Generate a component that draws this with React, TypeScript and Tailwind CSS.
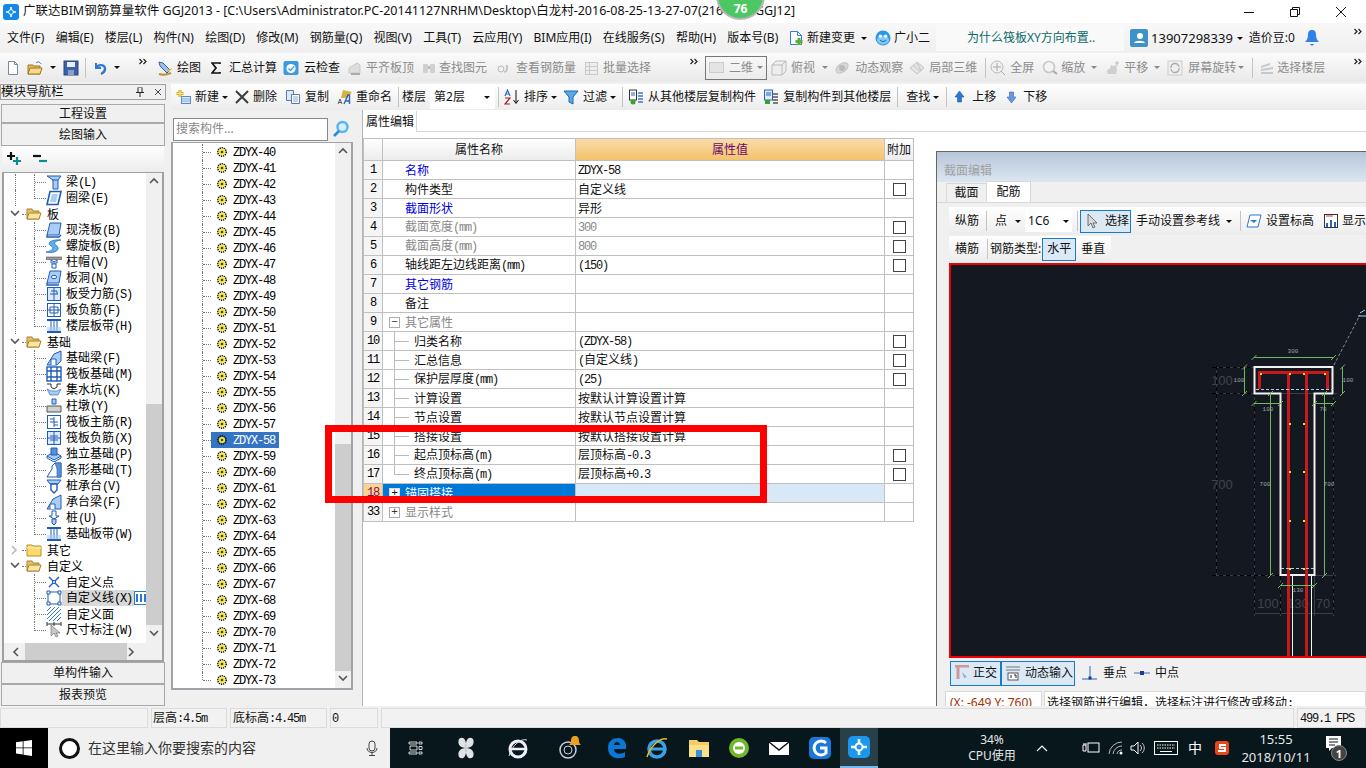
import type { ReactNode } from "react";
import clsx from "clsx";

const cjk = "font-['Noto_Sans','Noto_Sans_CJK_SC',sans-serif]";

function S({ children, w = 16, h = 16, vb }: { children: ReactNode; w?: number; h?: number; vb?: string }) {
  return (
    <svg width={w} height={h} viewBox={vb ?? `0 0 ${w} ${h}`} className="block shrink-0" fill="none">
      {children}
    </svg>
  );
}

// SimSun style text: latin runs get a fixed 6px advance
function Sim({ t }: { t: string }) {
  const parts = t.split(/([\x00-\x7f]+)/).filter(Boolean);
  return (
    <span className="font-['Noto_Sans_CJK_SC',sans-serif] text-[12px] leading-none whitespace-pre">
      {parts.map((p, i) =>
        /^[\x00-\x7f]/.test(p) ? (
          <span key={i} className="font-['Liberation_Mono',monospace] text-[12px] tracking-[-1.2px]">{p}</span>
        ) : (
          <span key={i}>{p}</span>
        ),
      )}
    </span>
  );
}

function Caret({ className, gray }: { className?: string; gray?: boolean }) {
  return (
    <span
      className={clsx(
        "block shrink-0 w-0 h-0 border-x-[3px] border-t-[3px] border-x-transparent",
        gray ? "border-t-[#888]" : "border-t-[#111]",
        className,
      )}
    />
  );
}

function Sep({ className }: { className?: string }) {
  return <span className={clsx("block w-px h-[20px] bg-[#c4c4c4] shrink-0", className)} />;
}

function More({ className }: { className?: string }) {
  return (
    <span className={clsx("block self-start mt-[5px] shrink-0", className)}>
      <S w={8} h={7}><path d="M.5 1l2.500 2.500L.5 6M4.500 1L7 3.500 4.500 6" stroke="#222" strokeWidth="1.200" /></S>
    </span>
  );
}

function Tool({ icon, label, off, className }: { icon?: ReactNode; label?: string; off?: boolean; className?: string }) {
  return (
    <div className={clsx("flex items-center shrink-0", off ? "text-[#8c8c8c]" : "text-[#111]", className)}>
      {icon}
      {label && <span className="whitespace-nowrap">{label}</span>}
    </div>
  );
}

/* ---------- toolbar icons ---------- */
const gl = "#c9c9c9";
const I = {
  file: <S><path d="M3.5 1.5h6l3 3v10h-9z" fill="#fff" stroke="#7a8a9a" /><path d="M9.5 1.5v3h3" stroke="#7a8a9a" /></S>,
  open: <S><path d="M1 5h5l1 1h6v8H1z" fill="#e8b95a" stroke="#a07820" /><path d="M3 8h12l-2 6H1z" fill="#f6d98c" stroke="#a07820" /><path d="M9 3c2-2 4-1 5 1" stroke="#3a70b0" /></S>,
  save: <S><rect x="1" y="1" width="14" height="14" fill="#3c5fa8" stroke="#2a4580" /><rect x="4" y="2" width="8" height="5" fill="#e8eef8" /><rect x="5" y="10" width="6" height="5" fill="#8aa0c8" /></S>,
  undo: <S><path d="M4 3v5h5" stroke="#2f78d0" strokeWidth="2" /><path d="M4 8c2-4 9-4 9 1 0 3-2 4-4 5" stroke="#2f78d0" strokeWidth="2.4" /></S>,
  draw: <S><path d="M2 2l4 1 7 7-3 3-7-7z" fill="#9cc0ea" stroke="#34609c" /><path d="M2 14c3 1 7 1 12-1" stroke="#c09030" strokeWidth="2" /><path d="M11 11l3-3 1 1-3 3z" fill="#e8c050" /></S>,
  sigma: <S w={10} vb="0 0 10 16"><path d="M9 4V3H1l4 5-4 5h8v-1" stroke="#111" strokeWidth="1.7" /></S>,
  cloud: <S><rect x="0.5" y="1" width="15" height="14" rx="2" fill="#3a9ae0" /><circle cx="8" cy="8.5" r="4.6" fill="#fff" /><path d="M5.5 8.5l2 2 3.5-4" stroke="#3a9ae0" strokeWidth="1.4" /></S>,
  align: <S><path d="M2 13V8l8-5 3 2v8z" fill="#ddd" stroke={gl} /><path d="M4 14h9" stroke="#aaa" strokeWidth="2" /></S>,
  binoc: <S><rect x="2" y="4" width="5" height="9" rx="1" fill="#d0d0d0" /><rect x="9" y="4" width="5" height="9" rx="1" fill="#d0d0d0" /><rect x="7" y="6" width="2" height="3" fill="#bbb" /></S>,
  link: <S><circle cx="5" cy="9" r="3" stroke="#bbb" /><path d="M11 5v4c0 2-2 3-3 3" stroke="#bbb" strokeWidth="1.6" /></S>,
  batch: <S><rect x="1.5" y="2.5" width="12" height="12" fill="#eee" stroke={gl} /><path d="M1.5 6.5h12M1.5 10.5h12M5.5 2.5v12" stroke={gl} /></S>,
  cube: <S><path d="M1 5l4-4h10v10l-4 4H1z" fill="#eee" stroke="#bbb" /><path d="M1 5h10v10M11 5l4-4" stroke="#bbb" /></S>,
  orbit: <S><ellipse cx="8" cy="8" rx="7" ry="4" transform="rotate(-35 8 8)" fill="#d8d8d8" stroke="#c4c4c4" /><circle cx="8" cy="8" r="3" fill="#bbb" /></S>,
  local: <S><path d="M1 8l7-6 7 6-7 6z" fill="#e4e4e4" stroke="#c4c4c4" /><path d="M4 5l7 6M8 2l4 9" stroke="#c4c4c4" /></S>,
  full: <S><circle cx="7" cy="7" r="6" fill="#f0f0f0" stroke="#bbb" /><path d="M7 3v8M3 7h8M11 11l4 4" stroke="#aaa" /></S>,
  zoom: <S><circle cx="7" cy="7" r="5.5" fill="#f4f4f4" stroke="#c8c8c8" strokeWidth="1.6" /><path d="M11 11l4 3" stroke="#aaa" strokeWidth="2" /></S>,
  pan: <S><path d="M3 14c-2-4 0-5 2-5l1-4 2 1 3-1 1 5-1 4z" fill="#cfcfcf" /><path d="M12 1v5M10 3h4" stroke="#bbb" /></S>,
  rotate: <S><rect x="1" y="1" width="14" height="14" fill="#f0f0f0" stroke="#ccc" /><path d="M4 8a4 4 0 0 1 8-1M12 8a4 4 0 0 1-8 1" stroke="#aaa" strokeWidth="1.4" /></S>,
  floor: <S><path d="M2 6l9-3v2l-9 3zM2 9l12-2v2L2 11zM2 12h12v2H2z" fill="#c8c8c8" /></S>,
  add: <S><path d="M5 1v7M1.5 4.5h7" stroke="#d8a820" strokeWidth="3" /><path d="M5 1v7M1.5 4.5h7" stroke="#fbe890" /><rect x="6.5" y="7.5" width="9" height="7" fill="#d6e6f8" stroke="#5a8cc8" /><path d="M6.5 10h9M6.5 12h9" stroke="#5a8cc8" strokeWidth=".6" /></S>,
  del: <S w={14} vb="0 0 14 16"><path d="M1 2l12 12M13 2L1 14" stroke="#3c3c3c" strokeWidth="2" /></S>,
  copy: <S><path d="M1.5 1.5h7v10h-7z" fill="#dce8f8" stroke="#5a7ca8" /><path d="M6.5 5.5h8v9h-8z" fill="#fff" stroke="#5a7ca8" /><path d="M8 8h5M8 10h5M8 12h5" stroke="#8aa6c8" /></S>,
  rename: <S><path d="M6 1l9 2-5 6H4z" fill="#d8b040" /><path d="M1 15l2-5 2 5M2 13.500h2" stroke="#333" strokeWidth=".8" /><path d="M7 15l4-9h1.500v9M9 12h3.500" stroke="#2a62b8" strokeWidth="1.400" /></S>,
  sort: <S><path d="M1 7l2.500-6L6 7M2 5h3" stroke="#2a6cc0" strokeWidth="1.200" /><path d="M1 9h5L1 15h5" stroke="#a02020" strokeWidth="1.200" /><path d="M12 1v13M9.5 11l2.5 3.5 2.5-3.5" stroke="#111" /></S>,
  filter: <S><path d="M1 2h14l-5 6v7l-4-2V8z" fill="#58a8e8" stroke="#1a66b0" /></S>,
  fromFloor: <S><rect x="1.5" y="1" width="7" height="10" fill="#fff" stroke="#333" /><path d="M3 4h4M3 6h4" stroke="#2a62b8" /><circle cx="5" cy="13" r="2.5" fill="#38a038" /><path d="M10 4h5M10 7h5M10 10h5M10 13h5" stroke="#3a78c8" strokeWidth="1.6" /></S>,
  toFloor: <S><rect x="1.5" y="1" width="8" height="10" fill="#dfe9f8" stroke="#2a62b8" /><path d="M3 4h5M3 6h5" stroke="#2a62b8" /><rect x="2" y="11" width="5" height="4" fill="#38a038" /><path d="M10 5h5M10 8h5M10 11h5M10 14h5" stroke="#555" strokeWidth="1.4" /></S>,
  up: <S w={11} vb="0 0 11 16"><path d="M5.5 2L10 8H7.5v5h-4V8H1z" fill="#2a7ad0" stroke="#1a58a8" strokeWidth=".6" /></S>,
  down: <S w={11} vb="0 0 11 16"><path d="M5.5 14L10 8H7.5V3h-4v5H1z" fill="#6a98e0" stroke="#3a64b8" strokeWidth=".6" /></S>,
  mag: <S w={18} h={18}><circle cx="10.5" cy="7" r="5" stroke="#5ab4ee" strokeWidth="2.4" fill="#d8eefb" /><path d="M7 11l-5 5" stroke="#2a8ad8" strokeWidth="2.6" /></S>,
  change: <S><path d="M2.5 1.5h7l4 4v9h-11z" fill="#fff" stroke="#2f80d8" /><path d="M9.5 1.5v4h4" stroke="#2f80d8" /><path d="M11 8v7M7.5 11.5h7" stroke="#5ab030" strokeWidth="3" /></S>,
  robot: <S w={18} h={18}><circle cx="9" cy="9" r="7.5" fill="#2a98e8" /><ellipse cx="9" cy="11" rx="6" ry="4.5" fill="#7cc8f4" /><circle cx="6.3" cy="7.2" r="1.6" fill="#fff" /><circle cx="11.7" cy="7.2" r="1.6" fill="#fff" /><path d="M6 11c2 2 4 2 6 0" stroke="#1a5a98" /></S>,
  user: <S w={18} h={18}><rect width="18" height="18" rx="2" fill="#3f92c8" /><circle cx="10" cy="7" r="3" fill="#fff" /><path d="M4 14c1-3 10-3 11 0z" fill="#fff" /></S>,
  bell: <S w={14} h={18}><path d="M7 1c3 0 4 2 4 5 0 3 1 5 3 7H0c2-2 3-4 3-7 0-3 1-5 4-5z" fill="#2f80e8" /><path d="M5 15c1 2 3 2 4 0z" fill="#2f80e8" /></S>,
};

/* ---------- tree icons ---------- */
const b = "#1e5cb8";
const lb = "#a9cdf5";
const T: Record<string, ReactNode> = {
  beam: <S><path d="M1 2h14l-3 4v9H7V6z" fill={lb} stroke={b} /><path d="M6 6h6" stroke={b} /></S>,
  ring: <S><path d="M4 1.5h11L12 14.5H1z" fill="#fff" stroke={b} strokeWidth="1.6" /><path d="M6 4h6l-2 8H4z" fill={lb} /></S>,
  slab: <S><path d="M4 1h11l-2 12H1z" fill={lb} stroke={b} /><path d="M1 13v2h12l2-2" stroke={b} strokeWidth="1.4" /></S>,
  spiral: <S><path d="M15 2C6 1 0 5 5 8c4 2 1 5-5 6 8 2 15-2 11-6C7 6 8 3 15 2z" fill="#5ab0ec" stroke={b} strokeWidth=".7" /></S>,
  cap: <S><path d="M0 3h16v2.500H0z" fill="#999" stroke="#555" strokeWidth=".6" /><path d="M5 6l3 2 3-2v3H5zM6 10h4v4H6z" fill="#fff" stroke={b} /></S>,
  hole: <S><path d="M4 1h11l-2 12H1z" fill={lb} stroke={b} /><ellipse cx="8" cy="7" rx="2.600" ry="1.700" fill="#fff" stroke={b} /><path d="M1 13v2h12" stroke={b} strokeWidth="1.400" /></S>,
  rebar: <S><rect x="1.500" y="1.500" width="13" height="13" fill="#dbe9fa" stroke={b} /><path d="M8 2v12M4 8h8" stroke={b} /><path d="M5 5h6v3" stroke={b} /></S>,
  neg: <S><rect x="1.500" y="1.500" width="13" height="13" fill="#fff" stroke={b} /><path d="M8 2v12M2 8h12M4 5h8v6H4z" stroke={b} /></S>,
  band: <S><path d="M1 2h14M1 14h14" stroke={b} strokeWidth="2" /><path d="M5 3v10M11 3v10M8 3v10" stroke={b} /><rect x="1" y="9" width="14" height="4" fill={lb} opacity=".6" /></S>,
  fbeam: <S><path d="M1 15L8 4l7-3v10l-4 4z" fill={lb} stroke={b} /><path d="M5 15V9h5v6" stroke={b} fill="#fff" /></S>,
  raft: <S><rect x="1" y="1" width="14" height="14" fill="#fff" stroke={b} strokeWidth="1.400" /><path d="M5 1v14M11 1v14M1 5h14M1 11h14" stroke={b} strokeWidth="1.400" /></S>,
  pit: <S><path d="M1 2h4v3l3 2 3-2V2h4" stroke="#333" /><path d="M1 7l3 6h8l3-6-4 2H5z" fill={lb} stroke={b} strokeWidth=".6" /></S>,
  pier: <S><path d="M6 1h4v5H6z" fill={lb} stroke={b} /><path d="M1 8h14v6H1z" fill="#d0d0d0" stroke="#555" /></S>,
  raftMain: <S><rect x="1.500" y="1.500" width="13" height="13" fill="#fff" stroke={b} /><path d="M8 3v10M4 8h8M4 5h4M8 11h4" stroke={b} /></S>,
  raftNeg: <S><rect x="1.500" y="1.500" width="13" height="13" fill="#dbe9fa" stroke={b} /><path d="M8 2v12M2 8h12M4 6h8M4 10h8" stroke={b} /></S>,
  iso: <S><path d="M1 10l7-4 7 4-7 4z" fill={lb} stroke={b} /><path d="M1 10v2l7 4 7-4v-2" stroke={b} /><path d="M5 2h6v7H5z" fill="#5a90d8" stroke={b} /></S>,
  strip: <S><path d="M1 15l5-8V4l3-3h6v14z" fill="#fff" stroke={b} /><path d="M9 1l2 6v8h4V1z" fill="#5a90d8" stroke={b} strokeWidth=".6" /></S>,
  capPile: <S><path d="M1 2h14l-3 4H4z" fill={lb} stroke={b} /><path d="M5 6h6v6l-3 3-3-3z" fill="#fff" stroke={b} strokeWidth="1.400" /></S>,
  capBeam: <S><path d="M1 15L7 5l8-4v14h-4z" fill={lb} stroke={b} /><path d="M4 15V10h5v5" fill="#fff" stroke={b} /></S>,
  pile: <S><path d="M6 1h4v5h3L8 9 3 6h3z" fill="#fff" stroke={b} /><path d="M6 9h4v4l-2 2-2-2z" fill={lb} stroke={b} /></S>,
  point: <S><path d="M3 3l10 10M13 3L3 13" stroke={b} strokeWidth="1.400" /><circle cx="8" cy="8" r="1.500" fill="#fff" stroke={b} /></S>,
  line: <S><rect x="2" y="2" width="12" height="12" stroke={b} /><path d="M1 1h3v3H1zM12 1h3v3h-3zM1 12h3v3H1zM12 12h3v3h-3z" fill="#fff" stroke={b} /></S>,
  face: <S><path d="M1 5l4-4M1 9l8-8M1 13L13 1M3 15L15 3M7 15l8-8M11 15l4-4" stroke="#2a78d0" /></S>,
  dim: <S><path d="M1 2h14M1 0v4M8 0v4M15 0v4" stroke="#333" /><path d="M5 3v11l3-3 2 4 2-1-2-3h4z" fill="#c8c8c8" stroke="#777" strokeWidth=".7" /></S>,
};

const folderOpen = <S><path d="M1 3h5l1 2h6v8H1z" fill="#e5bf62" stroke="#a8842c" /><path d="M3 7h12l-2 6H1z" fill="#fbe7a4" stroke="#a8842c" /></S>;
const folderShut = <S><path d="M1 3h5l1 1h8v10H1z" fill="#ffd96a" stroke="#b49030" /><path d="M1 6h14" stroke="#fff3c0" /></S>;

const nav = [
  { i: "beam", t: "梁(L)" }, { i: "ring", t: "圈梁(E)", last: true },
  { g: "板" },
  { i: "slab", t: "现浇板(B)" }, { i: "spiral", t: "螺旋板(B)" }, { i: "cap", t: "柱帽(V)" }, { i: "hole", t: "板洞(N)" },
  { i: "rebar", t: "板受力筋(S)" }, { i: "neg", t: "板负筋(F)" }, { i: "band", t: "楼层板带(H)", last: true },
  { g: "基础" },
  { i: "fbeam", t: "基础梁(F)" }, { i: "raft", t: "筏板基础(M)" }, { i: "pit", t: "集水坑(K)" }, { i: "pier", t: "柱墩(Y)" },
  { i: "raftMain", t: "筏板主筋(R)" }, { i: "raftNeg", t: "筏板负筋(X)" }, { i: "iso", t: "独立基础(P)" }, { i: "strip", t: "条形基础(T)" },
  { i: "capPile", t: "桩承台(V)" }, { i: "capBeam", t: "承台梁(F)" }, { i: "pile", t: "桩(U)" }, { i: "band", t: "基础板带(W)", last: true },
  { g: "其它", shut: true },
  { g: "自定义", end: true },
  { i: "point", t: "自定义点", tail: true }, { i: "line", t: "自定义线(X)", tail: true, sel: true }, { i: "face", t: "自定义面", tail: true }, { i: "dim", t: "尺寸标注(W)", tail: true, last: true },
] as { i?: string; t?: string; g?: string; last?: boolean; shut?: boolean; end?: boolean; tail?: boolean; sel?: boolean }[];

const dot = "border-dotted border-[#777]";

function Chevron({ dir }: { dir: "u" | "d" | "l" | "r" }) {
  const d = { u: "M1 6l4-4 4 4", d: "M1 2l4 4 4-4", l: "M6 1L2 5l4 4", r: "M2 1l4 4-4 4" }[dir];
  return (
    <svg width="10" height="10" viewBox="0 0 10 10" fill="none" className="block shrink-0 text-[#555]">
      <path d={d} stroke="currentColor" strokeWidth="1.600" />
    </svg>
  );
}

function NavRow({ r }: { r: (typeof nav)[number] }) {
  if (r.g) {
    return (
      <div className="flex items-center h-4">
        <div className="w-[3px] shrink-0" />
        <div className={clsx("w-[15px] flex justify-center items-center shrink-0", r.shut && "opacity-40")}><Chevron dir={r.shut ? "r" : "d"} /></div>
        <div className={clsx("w-[4px] border-t shrink-0", dot)} />
        {r.shut ? folderShut : folderOpen}
        <span className="ml-[5px]"><Sim t={r.g} /></span>
      </div>
    );
  }
  return (
    <div className="flex items-center h-4">
      <div className="w-[11px] shrink-0" />
      <div className={clsx("w-[19px] h-full shrink-0", !r.tail && "border-l", dot)} />
      <div className={clsx("w-[12px] self-start shrink-0 flex flex-col", r.last ? "h-[9px]" : "h-4", "border-l", dot)}>
        <div className={clsx("mt-[8px] border-t w-full", dot)} />
      </div>
      {T[r.i!]}
      <span className={clsx("flex items-center h-4 pl-[4px] pr-[2px]", r.sel && "bg-[#d9d9d9]")}><Sim t={r.t!} /></span>
      {r.sel && (
        <S w={14} h={14}><rect x=".5" y=".5" width="13" height="13" fill="#fff" stroke="#2a78d0" /><path d="M3 3v8M7 3v8M11 3v8" stroke="#2a78d0" strokeWidth="2" /></S>
      )}
    </div>
  );
}

function NavButton({ label, className }: { label: string; className?: string }) {
  return (
    <div className={clsx("mx-[1px] border border-[#a9a9a9] bg-[#f0f0f0] flex items-center justify-center text-[#111] text-[12px]", className)}>
      {label}
    </div>
  );
}

function LeftNav() {
  return (
    <div className="w-[166px] shrink-0 flex flex-col">
      <div className="h-[16px] border-[#a0a0a0] border flex items-center shrink-0 bg-[#f0f0f0]">
        <span className="text-[12.500px] leading-none text-[#111]">模块导航栏</span>
        <span className="ml-auto mr-[2px] flex items-center gap-[8px]">
          <S w={10} h={10}><path d="M2.500 0h5M3 1v4M7 1v4M1 5.500h8M5 6v4" stroke="#222" /></S>
          <S w={10} h={10}><path d="M2 2l6 6M8 2L2 8" stroke="#444" /></S>
        </span>
      </div>
      <div className="h-[4px] shrink-0" />
      <NavButton label="工程设置" className="h-[19px] shrink-0" />
      <NavButton label="绘图输入" className="h-[23px] shrink-0" />
      <div className="h-[26px] mx-[2px] bg-linear-to-b from-white to-[#ececec] flex items-center pl-[4px] gap-[10px] shrink-0">
        <S><path d="M5 1v8M1 5h8" stroke="#111" strokeWidth="2.200" /><path d="M11 6v8M7 10h8" stroke="#0d8c8c" strokeWidth="2.200" /></S>
        <S><path d="M1 5h8" stroke="#111" strokeWidth="2.200" /><path d="M7 10h8" stroke="#0d8c8c" strokeWidth="2.200" /></S>
      </div>
      <div className="flex-1 mx-[2px] border-2 border-t border-[#a0a0a0] bg-white flex flex-col min-h-0 overflow-hidden">
        <div className="flex flex-1 min-h-0">
          <div className="flex-1 pt-[1px] min-w-0 overflow-hidden">
            {nav.map((r, i) => <NavRow key={i} r={r} />)}
          </div>
          <div className="w-[16px] shrink-0 bg-[#f0f0f0] flex flex-col items-center pt-[4px] pb-[4px]">
            <Chevron dir="u" />
            <div className="flex-1 w-full mt-[217px] mb-[4px] bg-[#cdcdcd]" />
            <Chevron dir="d" />
          </div>
        </div>
        <div className="h-[17px] shrink-0 bg-[#f0f0f0] flex items-center pl-[8px] pr-[20px]">
          <Chevron dir="l" />
          <div className="w-[102px] h-full ml-[3px] bg-[#cdcdcd]" />
          <Chevron dir="r" />
        </div>
      </div>
      <NavButton label="单构件输入" className="h-[22px] shrink-0" />
      <NavButton label="报表预览" className="h-[22px] shrink-0" />
    </div>
  );
}

/* ---------- component list ---------- */
const Gear = (
  <S w={10} h={10}>
    <circle cx="5" cy="5" r="4.200" stroke="#111" strokeWidth="1.500" strokeDasharray="1.300 .8" />
    <circle cx="5" cy="5" r="3" fill="#fff000" />
    <circle cx="5" cy="5" r="1.300" fill="#333" />
  </S>
);
const zdyx = Array.from({ length: 34 }, (_, i) => 40 + i);

function ListPanel() {
  return (
    <div className="w-[182px] shrink-0 flex flex-col">
      <div className="flex h-[24px] items-center shrink-0 ml-[2px]">
        <div className="w-[155px] h-[23px] border border-[#8a8a8a] bg-white flex items-center pl-[2px] text-[#888] text-[12px]">搜索构件...</div>
        <div className="ml-[4px]">{I.mag}</div>
      </div>
      <div className="flex-1 mt-[1px] border-x-2 border-b-2 border-t border-[#a0a4a8] bg-white flex min-h-0 overflow-hidden">
        <div className="flex-1 pt-[1px]">
          {zdyx.map((n) => (
            <div key={n} className="flex items-center h-4">
              <div className="w-[29px] shrink-0" />
              <div className={clsx("w-[9px] border-l flex items-center shrink-0", dot, n === 73 ? "self-start h-[8px]" : "h-full")}>
                <div className={clsx("border-t w-full", dot, n === 73 && "mt-[8px]")} />
              </div>
              <span className={clsx("w-[68px] pl-[6px] h-4 flex items-center gap-[6px]", n === 58 && "bg-[#3574c4] text-white")}>
                {Gear}
                <Sim t={`ZDYX-${n}`} />
              </span>
            </div>
          ))}
        </div>
        <div className="w-[16px] shrink-0 bg-[#f0f0f0] flex flex-col items-center py-[4px]">
          <Chevron dir="u" />
          <div className="flex-1 w-full mt-[287px] mb-[3px] bg-[#cdcdcd]" />
          <Chevron dir="d" />
        </div>
      </div>
    </div>
  );
}

/* ---------- property table ---------- */
type Row = {
  n: string; name: string; value?: string; color?: string; box?: boolean; indent?: boolean; toggle?: string;
  last?: boolean; mute?: boolean; active?: boolean;
};
const rows: Row[] = [
  { n: "1", name: "名称", value: "ZDYX-58", color: "text-[#0000e0]" },
  { n: "2", name: "构件类型", value: "自定义线", box: true },
  { n: "3", name: "截面形状", value: "异形", color: "text-[#0000e0]" },
  { n: "4", name: "截面宽度(mm)", value: "300", box: true, mute: true },
  { n: "5", name: "截面高度(mm)", value: "800", box: true, mute: true },
  { n: "6", name: "轴线距左边线距离(mm)", value: "(150)", box: true },
  { n: "7", name: "其它钢筋", color: "text-[#0000e0]" },
  { n: "8", name: "备注" },
  { n: "9", name: "其它属性", toggle: "−", color: "text-[#888]" },
  { n: "10", name: "归类名称", value: "(ZDYX-58)", box: true, indent: true },
  { n: "11", name: "汇总信息", value: "(自定义线)", box: true, indent: true },
  { n: "12", name: "保护层厚度(mm)", value: "(25)", box: true, indent: true },
  { n: "13", name: "计算设置", value: "按默认计算设置计算", indent: true },
  { n: "14", name: "节点设置", value: "按默认节点设置计算", indent: true },
  { n: "15", name: "搭接设置", value: "按默认搭接设置计算", indent: true },
  { n: "16", name: "起点顶标高(m)", value: "层顶标高-0.3", box: true, indent: true },
  { n: "17", name: "终点顶标高(m)", value: "层顶标高+0.3", box: true, indent: true, last: true },
  { n: "18", name: "锚固搭接", toggle: "+", active: true },
  { n: "33", name: "显示样式", toggle: "+", color: "text-[#888]" },
];
const line = "border-r border-b border-[#c0c0c0]";

function PropRow({ r }: { r: Row }) {
  return (
    <div className="flex h-[19px]">
      <div className={clsx("w-[19px] flex items-center justify-center bg-[#f5f5f5] shrink-0", line, r.active && "bg-[#fcd38f] text-[#8a0a5a]")}>
        <span className="font-['Liberation_Mono',monospace] text-[12px] tracking-[-1.2px] leading-none">{r.n}</span>
      </div>
      <div className={clsx("w-[193px] flex items-center shrink-0", line, r.active && "bg-[#0078d7] text-white", r.color ?? (r.mute ? "text-[#888]" : "text-[#111]"))}>
        {r.toggle ? (
          <>
            <span className={clsx("ml-[6px] w-[11px] h-[11px] border flex items-center justify-center text-[11px] leading-none font-['Liberation_Mono',monospace] shrink-0", r.active ? "border-[#ddd] bg-white text-[#111]" : "border-[#aaa] text-[#333]")}>{r.toggle}</span>
            <span className="ml-[5px]"><Sim t={r.name} /></span>
          </>
        ) : r.indent ? (
          <>
            <div className={clsx("ml-[11px] w-[15px] border-l border-[#bbb] self-start flex flex-col shrink-0", r.last ? "h-[10px]" : "h-full")}>
              <div className="mt-[9px] h-px w-full bg-[#bbb]" />
            </div>
            <span className="ml-[5px]"><Sim t={r.name} /></span>
          </>
        ) : (
          <span className="ml-[22px]"><Sim t={r.name} /></span>
        )}
      </div>
      <div className={clsx("w-[309px] flex items-center pl-[2px] shrink-0", line, r.active && "bg-[#d8e8f6]", r.mute ? "text-[#888]" : "text-[#111]")}>
        {r.value && <Sim t={r.value} />}
      </div>
      <div className={clsx("w-[29px] flex items-center justify-center shrink-0", line)}>
        {r.box && <span className="block w-[13px] h-[13px] border border-[#444] bg-white" />}
      </div>
    </div>
  );
}

function PropPanel() {
  return (
    <div className="flex-1 flex flex-col bg-white min-w-0 ml-[9px] border-l border-[#b4b4b4]">
      <div className="h-[22px] flex shrink-0 items-end">
        <div className="w-[54px] h-[21px] border-r border-[#d8d8d8] flex items-center pl-[3px] text-[#111] text-[12px]">属性编辑</div>
        <div className="flex-1 border-b border-[#d8d8d8]" />
      </div>
      <div className="h-[6px] shrink-0" />
      <div className="w-[551px] border-l border-t border-[#c0c0c0]">
        <div className="flex h-[22px]">
          <div className={clsx("w-[19px] bg-linear-to-b from-white to-[#ececec] shrink-0", line)} />
          <div className={clsx("w-[193px] flex items-center justify-center bg-linear-to-b from-white to-[#ececec] text-[#111] shrink-0", line)}>属性名称</div>
          <div className={clsx("w-[309px] flex items-center justify-center bg-linear-to-b from-[#fadca8] to-[#f3c26a] text-[#6a0a6a] shrink-0", line)}>属性值</div>
          <div className={clsx("w-[29px] flex items-center justify-center bg-linear-to-b from-white to-[#ececec] text-[#111] shrink-0", line)}>附加</div>
        </div>
        {rows.map((r) => <PropRow key={r.n} r={r} />)}
      </div>
    </div>
  );
}

/* ---------- floating section editor ---------- */
const dk = "#3a3f47";
function SectionDrawing() {
  const yellow: [number, number][] = [[1260, 373], [1289, 373], [1303, 373], [1324, 373]];
  [423, 471, 520, 568].forEach((y) => { yellow.push([1289, y], [1303, y]); });
  const label = (x: number, y: number, t: string) => (
    <text key={t + x + y} x={x} y={y} fontSize="6" fill="#9aa4a8" textAnchor="middle" fontFamily="Liberation Mono">{t}</text>
  );
  const big = (x: number, y: number, t: string) => (
    <text key={t + x + y} x={x} y={y} fontSize="13" fill="#3f444c" textAnchor="middle" fontFamily="Liberation Sans">{t}</text>
  );
  return (
    <svg viewBox="951 265 415 391" width="415" height="391" className="block">
      {/* reference lines */}
      <g stroke={dk}>
        <path d="M1212 367.500H1254M1212 393.500H1337M1212 575.500H1336M1254 613.500H1333" />
        <path d="M1216.500 366V576M1254.500 393V616M1280.500 576V616M1314.500 576V616M1333.500 393V616" />
      </g>
      <g stroke="#000" strokeDasharray="4 3">
        <path d="M1216.500 366V576M1254.500 393V614M1280.500 576V614M1333.500 393V614" />
        <path d="M1212 367.500H1254M1212 393.500H1254M1212 575.500H1280" />
      </g>
      {big(1222, 385, "100")}
      {big(1222, 489, "700")}
      {big(1268, 608, "100")}
      {big(1298, 608, "130")}
      {big(1323, 608, "70")}
      {/* outline */}
      <path d="M1254.500 367H1332.500V393.500H1314.500V575H1280.500V393.500H1254.500Z" fill="none" stroke="#f2f2f2" strokeWidth="2" />
      <path d="M1292.500 576V656M1311.500 576V656" stroke="#f2f2f2" />
      <path d="M1334 365L1360 315" stroke="#8a8a8a" strokeDasharray="3 2" />
      <path d="M1360 313l5-3M1358 316h8" stroke="#a8d0f0" />
      {/* bars */}
      <g stroke="#c8181c" strokeWidth="3" fill="none">
        <path d="M1259.500 389V372.500H1327.500V389" />
        <path d="M1288.500 372V656M1306.500 372V656" />
      </g>
      <path d="M1256 389.500H1333M1281 568.500H1314" stroke="#a8d0f0" strokeDasharray="3 2" />
      {yellow.map(([x, y]) => <rect key={`${x}-${y}`} x={x} y={y} width="2" height="2" fill="#f0e020" />)}
      {/* dims */}
      <g stroke="#72b860" fill="none">
        <path d="M1254 357.500H1333M1251.500 360l5-5M1331 360l5-5" />
        <path d="M1244.500 367V393.500M1242 369.500l5-5M1242 396l5-5" />
        <path d="M1342.500 367V393.500M1340 369.500l5-5M1340 396l5-5" />
        <path d="M1254 403.500H1280M1251.500 406l5-5M1278 406l5-5" />
        <path d="M1314 403.500H1333M1312 406l5-5M1331 406l5-5" />
        <path d="M1270.500 393.500V575.500M1268 396l5-5M1268 578l5-5" />
        <path d="M1324.500 393.500V575.500M1322 396l5-5M1322 578l5-5" />
        <path d="M1280 585.500H1314M1278 588l5-5M1312 588l5-5" />
      </g>
      {label(1293, 353, "300")}
      {label(1239, 382, "100")}
      {label(1348, 382, "100")}
      {label(1268, 411, "100")}
      {label(1323, 411, "70")}
      {label(1265, 486, "700")}
      {label(1329, 486, "700")}
      {label(1298, 592, "130")}
    </svg>
  );
}

function FlatButton({ children, className }: { children: ReactNode; className?: string }) {
  return <div className={clsx("flex items-center border border-[#1a7ac8] bg-[#dbe9f6] text-[#111] shrink-0", className)}>{children}</div>;
}

function SectionWindow() {
  return (
    <div className="absolute left-[936px] top-[151px] w-[430px] h-[555px] overflow-hidden flex flex-col bg-[#f0f0f0] border-t border-l border-[#666] text-[12px] text-[#111]">
      <div className="h-[30px] shrink-0 bg-linear-to-b from-[#b6c6da] to-[#dce6f2] flex items-center pl-[7px] pt-[8px] text-[#a0a0a0]">截面编辑</div>
      <div className="h-[21px] shrink-0 flex border-b border-[#d8d8d8] pl-[9px] items-end">
        <div className="w-[40px] h-[19px] bg-[#f0f0f0] border-t border-l border-[#d8d8d8] flex items-center justify-center">截面</div>
        <div className="w-[45px] h-[21px] bg-white border-x border-t border-[#d8d8d8] flex items-center justify-center">配筋</div>
      </div>
      <div className="h-[4px] shrink-0" />
      <div className="h-[28px] shrink-0 ml-[12px] bg-linear-to-b from-white to-[#ececec] flex items-center pl-[6px] whitespace-nowrap overflow-hidden">
        <span>纵筋</span>
        <Sep className="ml-[7px]" />
        <span className="ml-[8px]">点</span>
        <Caret className="ml-[8px]" />
        <div className="ml-[4px] w-[49px] h-[22px] bg-white flex items-center pl-[3px] font-['Noto_Sans',sans-serif]">
          1C6<Caret className="ml-auto mr-[3px]" />
        </div>
        <Sep className="ml-[5px]" />
        <FlatButton className="ml-[2px] h-[23px] w-[51px] pl-[5px] gap-[3px]">
          <S w={13} h={16}><path d="M2 1v12l3-3 2 5 2-1-2-4h4z" fill="#d8d8d8" stroke="#555" strokeWidth=".8" /></S>
          <span className="ml-[3px]">选择</span>
        </FlatButton>
        <span className="ml-[5px]">手动设置参考线</span>
        <Caret className="ml-[6px]" />
        <Sep className="ml-[8px]" />
        <span className="ml-[5px]"><S><path d="M4 2h11l-3 12H1z" fill="#fff" stroke="#2a78d0" /><path d="M4 7h7l-3 3z" fill="#2a78d0" /></S></span>
        <span className="ml-[4px]">设置标高</span>
        <span className="ml-[9px]"><S><rect x="1.500" y="1.500" width="13" height="13" fill="#fff" stroke="#333" /><path d="M4 10v4M8 7v7M12 9v5" stroke="#2a62b8" strokeWidth="2" /><path d="M3 3h7" stroke="#c04040" /></S></span>
        <span className="ml-[3px]">显示</span>
      </div>
      <div className="h-px shrink-0" />
      <div className="h-[26px] shrink-0 ml-[12px] w-[162px] bg-linear-to-b from-white to-[#ececec] flex items-center pl-[6px] whitespace-nowrap">
        <span>横筋</span>
        <Sep className="ml-[8px]" />
        <span className="ml-[2px]">钢筋类型:</span>
        <FlatButton className="ml-[1px] w-[34px] h-[23px] justify-center">水平</FlatButton>
        <span className="ml-[5px]">垂直</span>
      </div>
      <div className="h-px shrink-0" />
      <div className="h-[395px] shrink-0 ml-[12px] border-2 border-r-0 border-[#f00000] bg-[#141820] overflow-hidden">
        <SectionDrawing />
      </div>
      <div className="h-[2px] shrink-0" />
      <div className="h-[26px] shrink-0 ml-[13px] flex items-center whitespace-nowrap">
        <FlatButton className="w-[51px] h-[25px] pl-[3px] gap-[3px]">
          <S><path d="M1 1h14M4 1v13" stroke="#d09898" strokeWidth="3" /><path d="M8 7l5 5-3 1z" fill="#aaa" /></S>
          <span>正交</span>
        </FlatButton>
        <FlatButton className="w-[74px] h-[25px] pl-[3px] gap-[4px]">
          <S><path d="M1 2h14M1 5h14" stroke="#777" /><rect x="3" y="8" width="10" height="7" fill="#fff" stroke="#555" /><path d="M6 10v3M9 10h2v3" stroke="#222" /></S>
          <span>动态输入</span>
        </FlatButton>
        <span className="ml-[7px]"><S><path d="M8 1v13M0 14h15" stroke="#6a90c8" strokeWidth="1.400" /><rect x="6.500" y="11.500" width="3" height="3" fill="#1a3c98" /></S></span>
        <span className="ml-[5px]">垂点</span>
        <span className="ml-[7px]"><S><path d="M0 8h16" stroke="#6a90c8" strokeWidth="1.400" /><rect x="6" y="6" width="4" height="4" fill="#1a3c98" /></S></span>
        <span className="ml-[5px]">中点</span>
      </div>
      <div className="h-[5px] shrink-0" />
      <div className="flex flex-1 ml-[8px] gap-[2px] min-h-0 items-start">
        <div className="w-[97px] h-[20px] border border-[#d8d8d8] bg-white pl-[4px] pt-[5px] text-[#a03000] font-['Noto_Sans',sans-serif] whitespace-nowrap shrink-0">(X: -649 Y: 760)</div>
        <div className="flex-1 h-[20px] border border-[#d8d8d8] bg-white pl-[2px] pt-[4px]"><Sim t="选择钢筋进行编辑，选择标注进行修改或移动:" /></div>
      </div>
    </div>
  );
}

/* ---------- top bars ---------- */
function TitleBar() {
  return (
    <div className="h-[23px] bg-white flex items-center shrink-0 text-[12.500px] text-[#111]">
      <span className="ml-[3px]">
        <S><rect width="16" height="16" rx="3" fill="#1488e8" /><path d="M8 3v10M3 8h10" stroke="#fff" strokeWidth="1.600" /><circle cx="8" cy="8" r="2.400" fill="#1488e8" stroke="#fff" /></S>
      </span>
      <span className="ml-[4px] whitespace-nowrap w-[704px] shrink-0">广联达BIM钢筋算量软件 GGJ2013 - [C:\Users\Administrator.PC-20141127NRHM\Desktop\白龙村-2016-08-25-13-27-07(216</span>
      {/* the rest of the name is hidden by the badge */}
      <span className="ml-[28px] whitespace-nowrap">GGJ12]</span>
      <div className="ml-auto flex pr-[2px]">
        <div className="w-[46px] flex justify-center"><S w={10} h={10}><path d="M0 5.500h10" stroke="#111" /></S></div>
        <div className="w-[46px] flex justify-center"><S w={10} h={10}><path d="M.500 2.500h7v7h-7zM2.500 2.500v-2h7v7h-2" stroke="#111" /></S></div>
        <div className="w-[46px] flex justify-center"><S w={10} h={10}><path d="M0 0l10 10M10 0L0 10" stroke="#111" /></S></div>
      </div>
    </div>
  );
}

const menus = ["文件(F)", "编辑(E)", "楼层(L)", "构件(N)", "绘图(D)", "修改(M)", "钢筋量(Q)", "视图(V)", "工具(T)", "云应用(Y)", "BIM应用(I)", "在线服务(S)", "帮助(H)", "版本号(B)"];

function MenuBar() {
  return (
    <div className="h-[30px] bg-linear-to-b from-[#f8f8f8] to-[#efefef] flex items-center shrink-0 text-[12px] text-[#111] pl-[7px] whitespace-nowrap">
      <div className="flex gap-[11.250px] w-[765px] shrink-0">
        {menus.map((m) => <span key={m} className="shrink-0">{m}</span>)}
      </div>
      <span className="ml-[16px]">{I.change}</span>
      <span className="ml-[3px]">新建变更</span>
      <Caret className="ml-[6px]" />
      <span className="ml-[7px]">{I.robot}</span>
      <span className="ml-[2px]">广小二</span>
      <div className="ml-[6px] w-[188px] h-[26px] bg-[#f9f9f9] flex items-center pl-[31px] text-[#0a6a6a] shrink-0">为什么筏板XY方向布置..</div>
      <span className="ml-[6px]">{I.user}</span>
      <span className="ml-[3px] font-['Noto_Sans',sans-serif] text-[13px]">13907298339</span>
      <Caret className="ml-[4px]" />
      <span className="ml-[6px]">造价豆:0</span>
      <span className="ml-[10px]">{I.bell}</span>
      <More className="ml-[35px]" />
    </div>
  );
}

function ToolbarTop() {
  return (
    <div className="h-[29px] mb-[2px] bg-linear-to-b from-[#fbfbfb] to-[#e9e9e9] flex items-center shrink-0 text-[12px]">
      <Tool className="ml-[5px]" icon={I.file} />
      <Tool className="ml-[6px]" icon={I.open} />
      <Caret className="ml-[7px]" />
      <Tool className="ml-[7px]" icon={I.save} />
      <Sep className="ml-[6px]" />
      <Tool className="ml-[6px]" icon={I.undo} />
      <Caret className="ml-[6px]" />
      <More className="ml-[19px]" />
      <Tool className="ml-[10px] gap-[4px]" icon={I.draw} label="绘图" />
      <Tool className="ml-[10px] gap-[8px]" icon={I.sigma} label="汇总计算" />
      <Tool className="ml-[6px] gap-[5px]" icon={I.cloud} label="云检查" />
      <Tool off className="ml-[7px] gap-[3px]" icon={I.align} label="平齐板顶" />
      <Tool off className="ml-[7px] gap-[2px]" icon={I.binoc} label="查找图元" />
      <Tool off className="ml-[9px] gap-[4px]" icon={I.link} label="查看钢筋量" />
      <Tool off className="ml-[8px] gap-[3px]" icon={I.batch} label="批量选择" />
      <More className="ml-[39px]" />
      <div className="ml-[7px] w-[62px] h-[24px] border border-[#777] flex items-center pl-[3px] text-[#8c8c8c] shrink-0">
        <span className="w-[15px] h-[11px] bg-[#e4e4e4] border border-[#ccc] shrink-0" />
        <span className="ml-[5px]">二维</span>
        <Caret gray className="ml-auto mr-[3px]" />
      </div>
      <Tool off className="ml-[4px] gap-[4px]" icon={I.cube} label="俯视" />
      <Caret gray className="ml-[7px]" />
      <Tool off className="ml-[6px] gap-[5px]" icon={I.orbit} label="动态观察" />
      <Tool off className="ml-[6px] gap-[4px]" icon={I.local} label="局部三维" />
      <Sep className="ml-[8px]" />
      <Tool off className="ml-[4px] gap-[4px]" icon={I.full} label="全屏" />
      <Tool off className="ml-[8px] gap-[3px]" icon={I.zoom} label="缩放" />
      <Caret gray className="ml-[6px]" />
      <Tool off className="ml-[8px] gap-[3px]" icon={I.pan} label="平移" />
      <Caret gray className="ml-[6px]" />
      <Tool off className="ml-[7px] gap-[5px]" icon={I.rotate} label="屏幕旋转" />
      <Caret gray className="ml-[2px]" />
      <Sep className="ml-[8px]" />
      <Tool off className="ml-[6px] gap-[2px]" icon={I.floor} label="选择楼层" />
      <More className="ml-[29px]" />
    </div>
  );
}

function ToolbarComponents() {
  return (
    <div className="h-[26px] ml-[5px] bg-linear-to-b from-white to-[#ececec] flex items-center shrink-0 text-[12px] pl-[4px]">
      <Tool className="gap-[4px]" icon={I.add} label="新建" />
      <Caret className="ml-[3px]" />
      <Tool className="ml-[7px] gap-[4px]" icon={I.del} label="删除" />
      <Tool className="ml-[8px] gap-[4px]" icon={I.copy} label="复制" />
      <Tool className="ml-[8px] gap-[3px]" icon={I.rename} label="重命名" />
      <Sep className="ml-[6px]" />
      <Tool className="ml-[3px]" label="楼层" />
      <div className="ml-[4px] w-[65px] h-[24px] bg-white flex items-center pl-[4px] text-[#111] shrink-0">
        第2层<Caret className="ml-auto mr-[5px]" />
      </div>
      <Sep className="ml-[3px]" />
      <Tool className="ml-[5px] gap-[4px]" icon={I.sort} label="排序" />
      <Caret className="ml-[3px]" />
      <Tool className="ml-[6px] gap-[4px]" icon={I.filter} label="过滤" />
      <Caret className="ml-[3px]" />
      <Sep className="ml-[6px]" />
      <Tool className="ml-[5px] gap-[4px]" icon={I.fromFloor} label="从其他楼层复制构件" />
      <Tool className="ml-[7px] gap-[4px]" icon={I.toFloor} label="复制构件到其他楼层" />
      <Sep className="ml-[6px]" />
      <Tool className="ml-[8px]" label="查找" />
      <Caret className="ml-[3px]" />
      <Sep className="ml-[7px]" />
      <Tool className="ml-[7px] gap-[7px]" icon={I.up} label="上移" />
      <Tool className="ml-[10px] gap-[6px]" icon={I.down} label="下移" />
    </div>
  );
}

function StatusBar() {
  const cell = "h-[20px] border border-[#dcdcdc] bg-[#f2f2f2] flex items-center shrink-0 text-[#111]";
  return (
    <div className="h-[21px] mt-[1px] flex items-center shrink-0 gap-[3px]">
      <div className={clsx(cell, "w-[148px]")} />
      <div className={clsx(cell, "w-[76px] pl-[1px]")}><Sim t="层高:4.5m" /></div>
      <div className={clsx(cell, "w-[97px] pl-[2px]")}><Sim t="底标高:4.45m" /></div>
      <div className={clsx(cell, "w-[48px] pl-[1px]")}><Sim t="0" /></div>
      <div className={clsx(cell, "flex-1")} />
      <div className={clsx(cell, "w-[69px] pl-[2px]")}><Sim t="499.1 FPS" /></div>
    </div>
  );
}

/* ---------- taskbar ---------- */
function Taskbar() {
  return (
    <div className="h-[40px] bg-[#07171c] flex items-center shrink-0 text-white">
      <div className="w-[48px] h-full bg-black flex items-center justify-center">
        <S><path d="M0 2.300l6.700-1V7.500H0zM7.500 1.200L16 0v7.500H7.500zM0 8.300h6.700v6.300l-6.700-1zM7.500 8.300H16V16l-8.500-1.200z" fill="#fff" /></S>
      </div>
      <div className="w-[342px] h-full bg-[#f0f0f0] flex items-center text-[#333] shrink-0">
        <span className="ml-[11px] block w-[21px] h-[21px] rounded-full border-[3px] border-[#111] bg-white" />
        <span className="ml-[8px] text-[14px]">在这里输入你要搜索的内容</span>
        <span className="ml-auto mr-[10px]"><S><rect x="5" y="1" width="6" height="10" rx="3" stroke="#444" /><path d="M3 8c0 6 10 6 10 0M8 12v3M5 15.500h6" stroke="#444" /></S></span>
      </div>
      <span className="ml-[18px]"><S><path d="M1 2h8v2H1zM1 12h8v2H1zM2 6h7v4H2zM11 2h3v2h-3zM11 6.500h3v3h-3zM11 12h3v2h-3z" stroke="#fff" strokeWidth=".8" /></S></span>
      <span className="ml-[30px]"><S w={24} h={24}><path d="M12 12C6 12 3 8 5 3c3-3 8-1 7 9zM12 12c6 0 9-4 7-9-3-3-8-1-7 9zM12 12c-6 0-9 4-7 9 3 3 8 1 7-9zM12 12c6 0 9 4 7 9-3 3-8 1-7-9z" fill="#dde3e6" /></S></span>
      <span className="ml-[28px]"><S w={24} h={24}><circle cx="12" cy="13" r="8" stroke="#eef" strokeWidth="3" /><path d="M5 13h14" stroke="#eef" strokeWidth="2.500" /><path d="M21 4C15 2 6 9 3 20" stroke="#dde" /></S></span>
      <span className="ml-[28px]"><S w={24} h={24}><circle cx="10" cy="14" r="8" stroke="#ccd" strokeWidth="1.500" /><circle cx="10" cy="14" r="4" stroke="#ccd" /><path d="M17 0c3 0 4 2 4 5 0 2 1 3 2 4H11c1-1 2-2 2-4 0-3 1-5 4-5z" fill="#e8a020" /></S></span>
      <span className="ml-[23px]"><S w={24} h={24}><path d="M3 12C3 5 8 2 13 2c6 0 9 5 8 11H9c0 5 7 6 11 3v5c-7 3-17 1-17-9zm6-3h6c0-4-6-4-6 0z" fill="#0a78d4" /></S></span>
      <span className="ml-[16px]"><S w={24} h={24}><circle cx="12" cy="13" r="8" stroke="#3aa0e8" strokeWidth="3.500" /><path d="M4 13h16" stroke="#3aa0e8" strokeWidth="3" /><path d="M22 3C16 1 6 9 2 21" stroke="#e8b820" strokeWidth="1.500" /></S></span>
      <span className="ml-[18px]"><S w={24} h={24}><path d="M2 4h8l2 2h10v15H2z" fill="#f3cf62" /><path d="M2 9h20v12H2z" fill="#fbe08a" /><path d="M9 14h6v7H9z" fill="#3a90d8" /></S></span>
      <span className="ml-[16px]"><S w={24} h={24}><circle cx="12" cy="12" r="10" fill="#72b82c" /><circle cx="12" cy="12" r="6" fill="#fff" /><path d="M8 12h8" stroke="#72b82c" strokeWidth="3" /></S></span>
      <span className="ml-[16px]"><S w={24} h={24}><path d="M2 6h20v13H2z" fill="#fff" /><path d="M2 6l10 8 10-8" stroke="#07171c" strokeWidth="1.500" /></S></span>
      <span className="ml-[17px]"><S w={24} h={24}><rect x="1" y="1" width="22" height="22" rx="5" fill="#1a78d8" /><path d="M18 7a7 7 0 1 0 0 10v-5h-6" stroke="#fff" strokeWidth="3" /></S></span>
      <div className="ml-[8px] w-[38px] h-full bg-[#2a4048] flex items-center justify-center border-b-2 border-[#76b9ed]">
        <S w={24} h={24}><rect x="1" y="1" width="22" height="22" rx="5" fill="#1a98f0" /><path d="M12 4v16M4 12h16" stroke="#fff" strokeWidth="2.500" /><circle cx="12" cy="12" r="3.500" fill="#1a98f0" stroke="#fff" strokeWidth="2" /></S>
      </div>
      <div className="ml-[84px] w-[60px] flex flex-col items-center text-[12px] leading-[16px] text-[#e8e8e8] shrink-0">
        <span>34%</span>
        <span>CPU使用</span>
      </div>
      <span className="ml-[13px]"><S w={14} h={10}><path d="M2 8l5-5 5 5" stroke="#fff" strokeWidth="1.200" /></S></span>
      <span className="ml-[33px]"><S w={18} h={16}><rect x="6" y="3" width="11" height="9" stroke="#fff" /><path d="M1 5h3v6H1zM2 3v2M4 3v2" stroke="#fff" /></S></span>
      <span className="ml-[8px]"><S w={18} h={16}><path d="M1 14a13 13 0 0 1 13-12M5 14a9 9 0 0 1 9-8M9 14a5 5 0 0 1 5-4" stroke="#bbb" /><circle cx="13" cy="13" r="1.500" fill="#fff" /></S></span>
      <span className="ml-[4px]"><S w={16} h={16}><path d="M1 6h3l4-4v12l-4-4H1z" stroke="#fff" /><path d="M10 5c2 2 2 4 0 6M12 3c3 3 3 7 0 10" stroke="#ccc" /></S></span>
      <span className="ml-[8px]"><S w={24} h={14}><rect x=".5" y=".5" width="23" height="13" stroke="#fff" /><path d="M3 4h18M3 7h18" stroke="#fff" strokeDasharray="1.500 1" /><path d="M6 10.500h12" stroke="#fff" /></S></span>
      <span className="ml-[10px] text-[14px] leading-none">中</span>
      <span className="ml-[12px]"><S><rect x="1" y="1" width="14" height="14" rx="3" fill="#e8451a" /><path d="M12 5H6v3h5v3H4" stroke="#fff" strokeWidth="2" /></S></span>
      <div className="ml-[7px] w-[78px] flex flex-col items-center text-[13px] leading-[18px] text-[#e8e8e8] shrink-0">
        <span>15:55</span>
        <span>2018/10/11</span>
      </div>
      <div className="ml-[10px] relative w-[22px] h-[26px] shrink-0">
        <S w={18} h={16}><path d="M1 1h15v12H7l-3 3v-3H1z" fill="#fff" /><path d="M4 4h9M4 7h9M4 10h6" stroke="#07171c" /></S>
        <span className="absolute right-0 bottom-0 w-[16px] h-[16px] rounded-full bg-[#444] border border-[#888] text-[11px] font-bold flex items-center justify-center">1</span>
      </div>
    </div>
  );
}

export default function App() {
  return (
    <div className={clsx("relative w-[1366px] h-[768px] overflow-hidden bg-[#f0f0f0] flex flex-col text-[12px] leading-none", cjk)}>
      <TitleBar />
      <MenuBar />
      <ToolbarTop />
      <div className="flex-1 flex min-h-0">
        <LeftNav />
        <div className="flex-1 flex flex-col min-w-0">
          <ToolbarComponents />
          <div className="flex-1 flex min-h-0 ml-[5px]">
            <div className="flex flex-col pt-[7px] h-full">
              <ListPanel />
            </div>
            <PropPanel />
          </div>
        </div>
      </div>
      <StatusBar />
      <Taskbar />

      <SectionWindow />

      {/* annotation drawn over the table */}
      <div className="absolute left-[325px] top-[425px] w-[442px] h-[78px] border-[7px] border-[#fe0000]" />

      {/* usage badge hanging from the top edge */}
      <div className="absolute left-[716px] top-[-29px] w-[49px] h-[49px] rounded-full bg-[#4cc764] border-[2px] border-[#b8b8b8] flex items-end justify-center pb-[3px] text-white font-bold text-[12px]">76</div>
    </div>
  );
}
